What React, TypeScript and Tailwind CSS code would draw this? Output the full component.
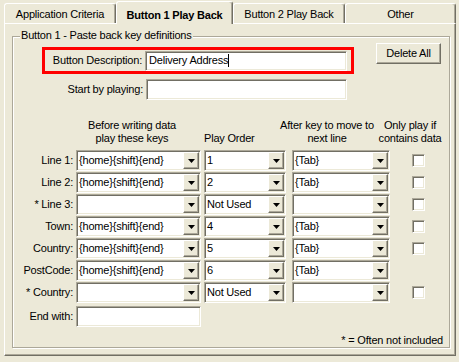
const sunken =
  "border border-t-[#ACA899] border-l-[#ACA899] border-r-white border-b-white shadow-[inset_1px_1px_0_#716F64,inset_-1px_-1px_0_#ECE9D8] bg-white";
const raised =
  "border border-t-white border-l-white border-r-[#716F64] border-b-[#716F64] shadow-[inset_-1px_-1px_0_#ACA899] bg-[#ECE9D8]";

const rows = [
  { label: "Line 1:", keys: "{home}{shift}{end}", order: "1", after: "{Tab}", check: true },
  { label: "Line 2:", keys: "{home}{shift}{end}", order: "2", after: "{Tab}", check: true },
  { label: "* Line 3:", keys: "", order: "Not Used", after: "", check: true },
  { label: "Town:", keys: "{home}{shift}{end}", order: "4", after: "{Tab}", check: true },
  { label: "Country:", keys: "{home}{shift}{end}", order: "5", after: "{Tab}", check: true },
  { label: "PostCode:", keys: "{home}{shift}{end}", order: "6", after: "{Tab}", check: false },
  { label: "* Country:", keys: "", order: "Not Used", after: "", check: true },
];

function Combo({ value, w }: { value: string; w: string }) {
  return (
    <div className={`${sunken} ${w} h-[21px] flex items-center p-px`}>
      <span className="flex-1 pl-[1px] whitespace-nowrap overflow-hidden">{value}</span>
      <div className={`${raised} w-[16px] h-[17px] flex items-center justify-center`}>
        <svg width="7" height="4" viewBox="0 0 7 4">
          <path d="M0 0h7L3.5 4z" fill="#000" />
        </svg>
      </div>
    </div>
  );
}

function Tab({ label, w }: { label: string; w: string }) {
  return (
    <div
      className={`${w} h-[20px] border-t border-l border-r border-white border-r-[#716F64] shadow-[inset_-1px_0_0_#ACA899] rounded-t-[3px] flex justify-center pt-[4px] whitespace-nowrap`}
    >
      {label}
    </div>
  );
}

export default function App() {
  return (
    <div className="w-[459px] h-[362px] bg-[#ECE9D8] pl-[4px] pt-[1px] font-['Liberation_Sans',Arial,sans-serif] text-[11px] leading-[13px] tracking-[-0.2px] text-black">
      {/* tabs */}
      <div className="flex items-end h-[22px]">
        <Tab w="w-[112px]" label="Application Criteria" />
        <div className="relative z-10 w-[117px] h-[23px] -mb-px bg-[#ECE9D8] border-t border-l border-r border-white border-r-[#716F64] shadow-[inset_-1px_0_0_#ACA899] rounded-t-[3px] flex justify-center pt-[7px] font-bold whitespace-nowrap">
          Button 1 Play Back
        </div>
        <Tab w="w-[112px]" label="Button 2 Play Back" />
        <Tab w="w-[111px]" label="Other" />
      </div>

      {/* panel */}
      <div className="w-[452px] h-[333px] border border-white border-r-[#716F64] border-b-[#716F64] shadow-[inset_-1px_-1px_0_#ACA899] pt-[12px] pl-[7px]">
        <div className="relative w-[438px] h-[312px] border border-[#ACA899] shadow-[inset_1px_1px_0_white,1px_1px_0_white]">
          <span className="absolute left-[7px] -top-[8px] bg-[#ECE9D8] px-[1px]">
            Button 1 - Paste back key definitions
          </span>

          {/* description + delete all */}
          <div className="flex items-start mt-[6px]">
            <div className="ml-[29px] mt-[4px] w-[312px] h-[27px] border-[3px] border-[#FF0000] flex items-center">
              <span className="w-[97px] text-right whitespace-nowrap">Button Description:</span>
              <div className={`${sunken} ml-[3px] w-[202px] h-[20px] flex items-center pl-[3px]`}>
                <span className="whitespace-nowrap">Delivery Address</span>
                <span className="w-px h-[13px] bg-black" />
              </div>
            </div>
            <button className={`${raised} ml-[22px] w-[65px] h-[21px] text-center`}>Delete All</button>
          </div>

          {/* start by playing */}
          <div className="flex items-center mt-[5px]">
            <span className="w-[130px] text-right whitespace-nowrap">Start by playing:</span>
            <div className={`${sunken} ml-[3px] w-[201px] h-[21px]`} />
          </div>

          {/* headers */}
          <div className="flex items-end mt-[19px] whitespace-nowrap">
            <div className="ml-[51px] w-[136px] flex flex-col items-center">
              <span>Before writing data</span>
              <span>play these keys</span>
            </div>
            <div className="ml-[4px] w-[72px]">Play Order</div>
            <div className="w-[102px] flex flex-col items-center">
              <span>After key to move to</span>
              <span>next line</span>
            </div>
            <div className="w-[64px] flex flex-col items-center">
              <span>Only play if</span>
              <span>contains data</span>
            </div>
          </div>

          {/* rows */}
          <div className="flex flex-col gap-px mt-[5px]">
            {rows.map((r) => (
              <div key={r.label} className="flex items-center h-[21px]">
                <span className="w-[60px] text-right whitespace-nowrap">{r.label}</span>
                <div className="ml-[3px]">
                  <Combo value={r.keys} w="w-[125px]" />
                </div>
                <div className="ml-[3px]">
                  <Combo value={r.order} w="w-[82px]" />
                </div>
                <div className="ml-[6px]">
                  <Combo value={r.after} w="w-[98px]" />
                </div>
                {r.check && <div className={`${sunken} ml-[22px] w-[13px] h-[13px]`} />}
              </div>
            ))}
          </div>

          {/* end with */}
          <div className="flex items-center mt-[3px]">
            <span className="w-[60px] text-right whitespace-nowrap">End with:</span>
            <div className={`${sunken} ml-[3px] w-[125px] h-[21px]`} />
          </div>

          <div className="flex justify-end pr-[6px] mt-[7px]">* = Often not included</div>
        </div>
      </div>
    </div>
  );
}
